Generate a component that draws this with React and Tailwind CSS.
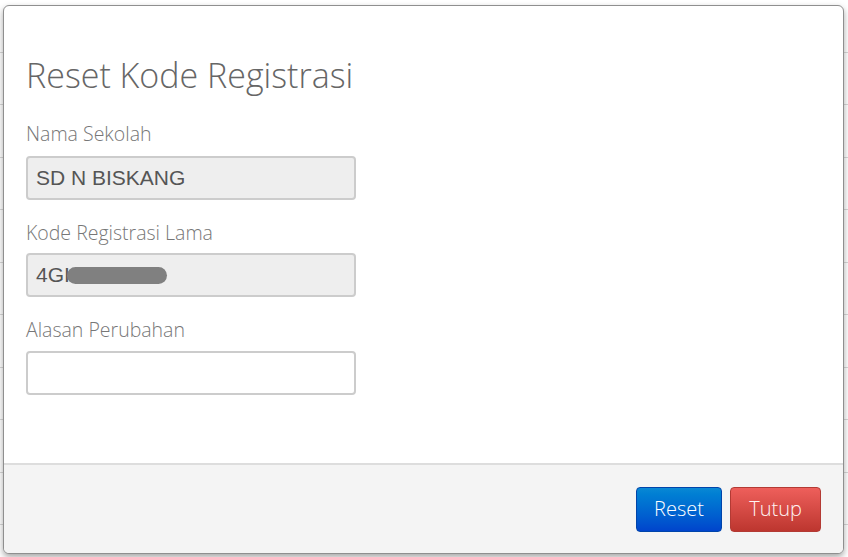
import React from 'react';

const rows = Array.from({ length: 11 });

const Field = ({ label, children, className = '' }) => (
    <div className={className}>
        <div className="text-[19.5px] leading-[24px] font-light text-[#777777]">{label}</div>
        {children}
    </div>
);

const App = () => {
    return (
        <div className="relative w-[848px] h-[557px] overflow-hidden bg-white" style={{ fontFamily: '"Open Sans", "Noto Sans", sans-serif' }}>
            {/* tabel di belakang modal */}
            <div className="flex flex-col">
                {rows.map((_, i) => (
                    <div key={i} className="h-[52.5px] shrink-0 border-b border-[#d8d8d8]" />
                ))}
            </div>

            {/* modal */}
            <div className="absolute left-[3px] top-[5px] right-[4px] bottom-[3px] flex flex-col rounded-[6px] border border-[#8f8f8f] bg-white shadow-[0_3px_6px_rgba(0,0,0,0.35)] overflow-hidden">
                <div className="flex-1 pl-[22px] pt-[49px]">
                    <h3 className="text-[34px] leading-[40px] font-light text-[#666666]">Reset Kode Registrasi</h3>

                    <Field label="Nama Sekolah" className="mt-[27px]">
                        <div className="mt-[10px] w-[330px] h-[44px] flex items-center px-[8px] rounded-[4px] border-2 border-[#cccccc] bg-[#eeeeee] text-[21px] text-[#555555]" style={{ fontFamily: '"Liberation Sans", Arial, sans-serif' }}>
                            SD N BISKANG
                        </div>
                    </Field>

                    <Field label="Kode Registrasi Lama" className="mt-[21px]">
                        <div className="mt-[8px] w-[330px] h-[44px] flex items-center px-[8px] rounded-[4px] border-2 border-[#cccccc] bg-[#eeeeee] text-[21px] text-[#555555]" style={{ fontFamily: '"Liberation Sans", Arial, sans-serif' }}>
                            <span>4GI</span>
                            <span className="ml-[-3px] w-[100px] h-[17px] rounded-full bg-[#808080]" />
                        </div>
                    </Field>

                    <Field label="Alasan Perubahan" className="mt-[21px]">
                        <input
                            type="text"
                            className="mt-[9px] block w-[330px] h-[44px] px-[8px] rounded-[4px] border-2 border-[#cccccc] bg-white text-[21px] text-[#555555] outline-none"
                        />
                    </Field>
                </div>

                <div className="h-[90px] shrink-0 flex items-center justify-end gap-[8px] pr-[22px] border-t-2 border-[#dddddd] bg-[#f4f4f4]">
                    <button className="w-[86px] h-[45px] rounded-[4px] border border-[#0044aa] bg-linear-to-b from-[#0a88d4] to-[#0044cc] text-white text-[20px] font-light">
                        Reset
                    </button>
                    <button className="w-[91px] h-[45px] rounded-[4px] border border-[#b33a34] bg-linear-to-b from-[#ee5f5b] to-[#bd362f] text-[#fff5f5] text-[20px] font-light">
                        Tutup
                    </button>
                </div>
            </div>
        </div>
    );
};

export default App;
